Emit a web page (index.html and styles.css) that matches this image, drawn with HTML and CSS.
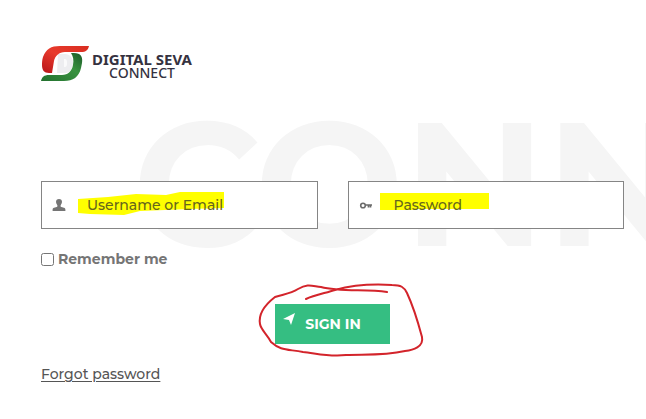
FILE: index.html
```html
<!DOCTYPE html>
<html lang="en">
<head>
<meta charset="utf-8">
<meta name="viewport" content="width=device-width, initial-scale=1">
<title>Digital Seva Connect</title>
<link rel="stylesheet" href="styles.css">
</head>
<body>
<main class="page">
  <div class="watermark" aria-hidden="true">CONNECT</div>
  <header class="brand">
    <svg class="brand-mark" viewBox="0 0 48 36" aria-hidden="true">
      <defs>
        <linearGradient id="red" x1="0" y1="1" x2="1" y2="0"><stop offset="0" stop-color="#b81519"/><stop offset=".5" stop-color="#e83a2c"/><stop offset="1" stop-color="#d92d20"/></linearGradient>
        <linearGradient id="green" x1="0" y1="1" x2="1" y2="0"><stop offset="0" stop-color="#23702f"/><stop offset=".6" stop-color="#38923f"/><stop offset="1" stop-color="#1c5a28"/></linearGradient>
      </defs>
      <path fill="#ededf0" d="M17 9h7c5 0 8 4 8 9s-3 10-8 10h-8z"/>
      <path fill="#fafafb" d="M23 14c3 0 3 2 3 4s0 4-3 4z"/>
      <path fill="url(#red)" d="M48 1c-1 4-3 6-8 6H24c-6 0-10 4-11 9l-2 12H8c-5 0-7-3-7-8 0-2 0-5 1-8C5 4 10 1 19 1z"/>
      <path fill="url(#green)" d="M30 8h3c7 0 9 4 8 10l-1 5c-2 9-8 13-17 13H0c1-4 3-6 8-6h13c6 0 10-4 11-10 1-5 0-9-2-12z"/>
    </svg>
    <div class="brand-name"><strong>DIGITAL SEVA</strong><span>CONNECT</span></div>
  </header>
  <form class="login">
    <div class="fields">
      <div class="field">
        <svg class="marker marker-user" viewBox="0 0 148 26" aria-hidden="true"><path fill="#ff0" d="M0 8 30 6 58 3 88 4 102 1 146 1V17L112 18 62 20 46 24 12 23 0 22z"/></svg>
        <svg class="icon" viewBox="0 0 14 14" aria-hidden="true"><path fill="#757575" d="M7 1c2 0 3 1 3 3 0 1-.6 2-1.200 3-.4.8-.3 1.700.5 2l2.700.8c1 .4 1.400.9 1.400 2.200V13H.6v-1c0-1.300.4-1.800 1.400-2.200L4.700 9c.8-.3.9-1.200.5-2C4.600 6 4 5 4 4c0-2 1-3 3-3z"/></svg>
        <input type="text" aria-label="Username or Email" placeholder="Username or Email">
      </div>
      <div class="field">
        <svg class="marker marker-password" viewBox="0 0 110 17" aria-hidden="true"><path fill="#ff0" d="M0 0h109v16H38l-7 1H0z"/></svg>
        <svg class="icon" viewBox="0 0 14 14" aria-hidden="true"><circle cx="4" cy="7.500" r="2.300" fill="none" stroke="#6b6b6b" stroke-width="1.600"/><path d="M6.500 7H13M9.500 7v2.500M11.500 7v2.500" fill="none" stroke="#6b6b6b" stroke-width="1.700"/></svg>
        <input type="password" aria-label="Password" placeholder="Password">
      </div>
    </div>
    <label class="remember"><input type="checkbox">Remember me</label>
    <div class="actions">
      <button type="submit" class="submit">
        <svg class="arrow" viewBox="0 0 14 14" aria-hidden="true"><path fill="#fff" d="M12 1 8 13 6 8 0 7z"/></svg>
        SIGN IN
      </button>
      <svg class="scribble" viewBox="0 0 170 80" aria-hidden="true"><path fill="none" stroke="#d3242b" stroke-width="2" stroke-linecap="round" stroke-linejoin="round" d="M48 15C56 11 68 9 77 6 95 1 118 0 134 1 143 1 146 3 149 9 156 24 160 38 164 53 166 63 155 66 147 67 125 72 104 70 88 71 70 73 57 69 45 68 29 65 23 67 13 58 9 50 3 46 2 40 0 29 8 20 17 13 26 10 32 10 40 5 50-1 54 2 63 3 82 8 107 5 129 8"/></svg>
    </div>
    <a class="forgot" href="#forgot">Forgot password</a>
  </form>
</main>
</body>
</html>
```
FILE: styles.css
```css
* { box-sizing: border-box; }

body {
  margin: 0;
  background: #fff;
  color: #666;
  font-family: Montserrat, Inter, "Liberation Sans", sans-serif;
  font-size: 14px;
  font-weight: 500;
  line-height: 20px;
}

.page {
  position: relative;
  min-height: 100vh;
  padding: 45px 22px 24px 41px;
  overflow: hidden;
}

.watermark {
  position: absolute;
  z-index: -1;
  top: 119px;
  left: 133px;
  color: #f5f5f5;
  font-size: 176px;
  font-weight: 700;
  line-height: 128px;
  white-space: nowrap;
}

.brand {
  display: flex;
  align-items: center;
  gap: 3px;
  margin-bottom: 100px;
}

.brand-mark {
  width: 48px;
  height: 36px;
}

.brand-name {
  display: flex;
  flex-direction: column;
  align-items: center;
  padding-top: 5px;
  color: #35323f;
  font-family: "Noto Sans", "Open Sans", sans-serif;
  font-size: 15px;
  line-height: 13px;
}

.brand-name strong { font-weight: 700; }

.brand-name span {
  font-size: 14px;
  font-weight: 500;
}

.fields {
  display: grid;
  grid-template-columns: 1fr 1fr;
  gap: 30px;
}

.field {
  position: relative;
  display: flex;
  align-items: center;
  height: 48px;
  padding-left: 10px;
  border: 1px solid #858585;
  background: #fff;
}

.icon {
  position: relative;
  flex: none;
  width: 14px;
  height: 14px;
}

.field input {
  position: relative;
  flex: 1;
  min-width: 0;
  height: 100%;
  padding: 0 12px 0 21px;
  border: 0;
  outline: 0;
  background: transparent;
  color: #555;
  font: inherit;
}

.field input::placeholder {
  color: #66661c;
  opacity: 1;
}

.marker { position: absolute; }

.marker-user {
  top: 9px;
  left: 36px;
  width: 148px;
  height: 26px;
}

.marker-password {
  top: 11px;
  left: 31px;
  width: 110px;
  height: 17px;
}

.remember {
  display: flex;
  align-items: center;
  gap: 4px;
  width: fit-content;
  margin-top: 20px;
  color: #757575;
  font-weight: 700;
}

.remember input {
  width: 13px;
  height: 13px;
  margin: 0;
}

.actions {
  position: relative;
  width: fit-content;
  margin: 35px auto 20px;
}

.submit {
  display: flex;
  align-items: center;
  gap: 8px;
  height: 40px;
  padding: 0 29px 0 8px;
  border: 0;
  background: #35be82;
  color: #fff;
  font: inherit;
  font-weight: 700;
}

.arrow {
  align-self: flex-start;
  width: 14px;
  height: 14px;
  margin-top: 8px;
}

.scribble {
  position: absolute;
  top: -20px;
  left: -17px;
  width: 170px;
  height: 80px;
  overflow: visible;
  pointer-events: none;
}

.forgot {
  color: #555;
  text-underline-offset: 2px;
}
```
